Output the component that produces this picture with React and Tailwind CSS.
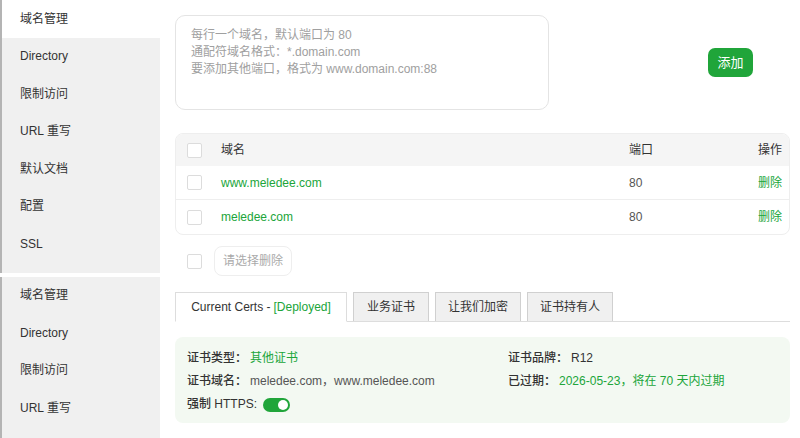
import React from "react";

const font = { fontFamily: '"Liberation Sans", "Noto Sans CJK SC", sans-serif' };

function Checkbox() {
  return <span className="inline-block w-[15px] h-[15px] border border-[#dcdcdc] rounded-[2px] bg-white shrink-0" />;
}

function SideBlock({ items, activeFirst, extra }) {
  return (
    <div className={`w-[160px] bg-[#f0f0f0] border-l-2 border-[#b4b4b4] ${extra}`}>
      {items.map((t, i) => (
        <div
          key={i}
          className={`h-[37.5px] flex items-center pl-[18px] text-[12px] text-[#333] ${activeFirst && i === 0 ? "bg-white" : ""}`}
        >
          {t}
        </div>
      ))}
    </div>
  );
}

export default function App() {
  const items1 = ["域名管理", "Directory", "限制访问", "URL 重写", "默认文档", "配置", "SSL"];
  const items2 = ["域名管理", "Directory", "限制访问", "URL 重写"];
  return (
    <div className="w-[800px] h-[438px] overflow-hidden bg-white flex" style={font}>
      <div className="w-[160px] flex flex-col gap-[4px] shrink-0">
        <SideBlock items={items1} activeFirst extra="pb-[10px]" />
        <SideBlock items={items2} extra="flex-1" />
      </div>
      <div className="flex-1 pl-[15px] pr-[10px] pt-[15px] flex flex-col">
        {/* textarea + add */}
        <div className="flex items-center">
          <div className="w-[374px] h-[95px] border border-[#e4e4e4] rounded-[10px] px-[15px] pt-[11px] text-[12px] leading-[17px] text-[#a0a0a0]">
            <div>每行一个域名，默认端口为 80</div>
            <div>通配符域名格式：*.domain.com</div>
            <div>要添加其他端口，格式为 www.domain.com:88</div>
          </div>
          <button className="ml-[159px] w-[45px] h-[29px] bg-[#20a53a] rounded-[7px] text-white text-[13px] flex items-center justify-center">
            添加
          </button>
        </div>
        {/* table */}
        <div className="mt-[23px] border border-[#eeeeee] rounded-[8px] overflow-hidden text-[12px]">
          <div className="h-[32px] bg-[#f5f5f5] flex items-center pl-[11px] pr-[7px] text-[#333]">
            <Checkbox />
            <span className="ml-[19px] w-[408px]">域名</span>
            <span className="flex-1">端口</span>
            <span>操作</span>
          </div>
          {["www.meledee.com", "meledee.com"].map((d, i) => (
            <div key={d} className={`h-[34px] flex items-center pl-[11px] pr-[7px] ${i === 0 ? "border-b border-[#eeeeee]" : ""}`}>
              <Checkbox />
              <span className="ml-[19px] w-[408px] text-[#20a53a]">{d}</span>
              <span className="flex-1 text-[#555]">80</span>
              <span className="text-[#20a53a]">删除</span>
            </div>
          ))}
        </div>
        {/* bulk */}
        <div className="mt-[11px] flex items-center pl-[12px]">
          <Checkbox />
          <button className="ml-[12px] h-[30px] w-[78px] border border-[#eeeeee] rounded-[8px] text-[12px] text-[#aaa]">
            请选择删除
          </button>
        </div>
        {/* tabs */}
        <div className="mt-[16px] flex items-end gap-[6px] border-b border-[#dddddd] h-[30px] text-[12px]">
          <div className="w-[172px] h-[30px] -mb-px bg-white border border-[#dddddd] border-b-white flex items-center justify-center text-[#333]">
            Current Certs - <span className="text-[#20a53a] ml-[3px]">[Deployed]</span>
          </div>
          <div className="w-[76px] h-[29px] bg-[#f0f0f0] border border-[#d0d0d0] border-b-0 flex items-center justify-center text-[#333]">业务证书</div>
          <div className="w-[86px] h-[29px] bg-[#f0f0f0] border border-[#d0d0d0] border-b-0 flex items-center justify-center text-[#333]">让我们加密</div>
          <div className="w-[86px] h-[29px] bg-[#f0f0f0] border border-[#d0d0d0] border-b-0 flex items-center justify-center text-[#333]">证书持有人</div>
        </div>
        {/* cert box */}
        <div className="mt-[15px] h-[86px] bg-[#f3f9f2] rounded-[8px] px-[12px] pt-[10px] text-[12px] leading-[23px] flex">
          <div className="w-[321px]">
            <div>
              <span className="text-[#333] font-medium">证书类型：</span>
              <span className="text-[#20a53a] ml-[3px]">其他证书</span>
            </div>
            <div>
              <span className="text-[#333] font-medium">证书域名：</span>
              <span className="text-[#555] ml-[3px]">meledee.com，www.meledee.com</span>
            </div>
            <div className="flex items-center">
              <span className="text-[#333] font-medium">强制 HTTPS:</span>
              <span className="ml-[6px] w-[27px] h-[14px] rounded-full bg-[#20a53a] relative inline-block">
                <span className="absolute right-[2px] top-[2px] w-[10px] h-[10px] rounded-full bg-white" />
              </span>
            </div>
          </div>
          <div>
            <div>
              <span className="text-[#333] font-medium">证书品牌：</span>
              <span className="text-[#333] ml-[3px]">R12</span>
            </div>
            <div>
              <span className="text-[#333] font-medium">已过期：</span>
              <span className="text-[#20a53a] ml-[3px]">2026-05-23，将在 70 天内过期</span>
            </div>
          </div>
        </div>
      </div>
    </div>
  );
}
